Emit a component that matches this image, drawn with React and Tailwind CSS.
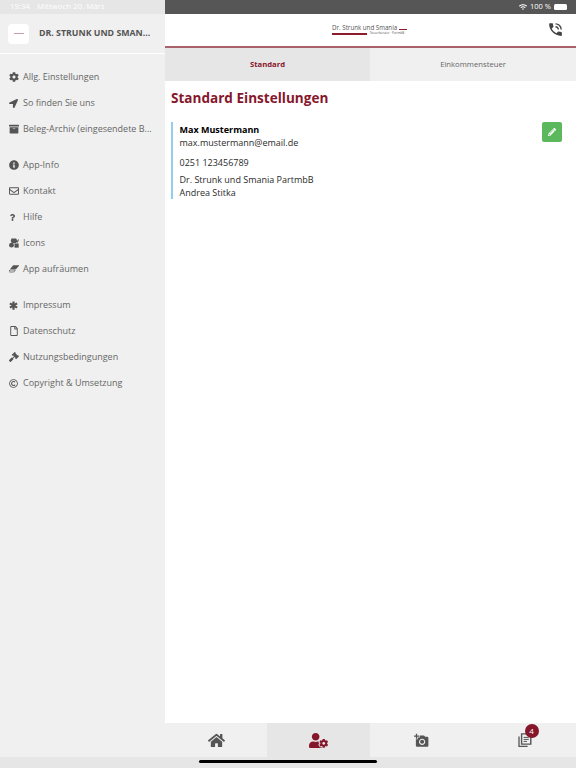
import { FaCog, FaLocationArrow, FaArchive, FaInfoCircle, FaRegEnvelope, FaQuestion, FaRegFile, FaGavel, FaRegCopyright, FaHome, FaUserCog, FaPencilAlt, FaWifi } from "react-icons/fa";
import { MdAddAPhoto, MdPhoneInTalk } from "react-icons/md";

// Small drawn icons the packages have no match for
function ObjectsIcon({ size }) {
    return (
        <svg width={size} height={size} viewBox="0 0 12 12" fill="currentColor">
            <path d="M3 0.5h5.5L10.5 4 8 6.2H3.5L2 3.5Z" />
            <circle cx="3" cy="8.6" r="2.9" />
            <path d="M6.6 6.6h5v5h-5Z" />
            <path d="M9.2 5.4 11 1.6l1 .5-1.6 3.6Z" />
        </svg>
    );
}

function EraserIcon({ size }) {
    return (
        <svg width={size} height={size} viewBox="0 0 12 12" fill="currentColor">
            <path d="M5 1.6H12.4L8.4 6.4H1.2Z" />
            <path d="M1 7.2H7.6L5.8 9.6H0.4C-0.1 9.6 0 9 0.2 8.4Z" fill="none" stroke="currentColor" strokeWidth="0.9" />
        </svg>
    );
}

function StarIcon({ size }) {
    return (
        <svg width={size} height={size} viewBox="0 0 12 12" stroke="currentColor" strokeWidth="3" fill="none">
            <path d="M6 0.5v11M1.2 3.2l9.6 5.6M10.8 3.2l-9.6 5.6" />
        </svg>
    );
}

function DocsIcon({ size }) {
    return (
        <svg width={size} height={size} viewBox="0 0 14 14" fill="none" stroke="currentColor">
            <path d="M1 3.4v10h8.6" strokeWidth="1.3" />
            <path d="M3.6 0.9h9.2v10.2H3.6Z" strokeWidth="1.4" />
            <path d="M5.6 4.4h5.2M5.6 6.4h5.2M5.6 8.4h3.4" strokeWidth="1" />
        </svg>
    );
}

const groups = [
  [
    { icon: FaCog, label: "Allg. Einstellungen" },
    { icon: FaLocationArrow, label: "So finden Sie uns", size: 9 },
    { icon: FaArchive, label: "Beleg-Archiv (eingesendete B..." },
  ],
  [
    { icon: FaInfoCircle, label: "App-Info" },
    { icon: FaRegEnvelope, label: "Kontakt" },
    { icon: FaQuestion, label: "Hilfe", size: 7 },
    { icon: ObjectsIcon, label: "Icons" },
    { icon: EraserIcon, label: "App aufräumen" },
  ],
  [
    { icon: StarIcon, label: "Impressum", size: 9 },
    { icon: FaRegFile, label: "Datenschutz" },
    { icon: FaGavel, label: "Nutzungsbedingungen" },
    { icon: FaRegCopyright, label: "Copyright & Umsetzung", size: 9 },
  ],
];

function Sidebar() {
    return (
        <aside className="w-[165px] shrink-0 flex flex-col bg-[#f0f0f0]">
            <div className="h-[14px] bg-[#e6e6e6] pl-[10px] flex items-center gap-[7px] text-[7.5px] text-white tracking-wide">
                <span>19:34</span>
                <span>Mittwoch 20. März</span>
            </div>
            {/* App title */}
            <div className="h-[40px] flex items-center pl-[8px] border-b border-white">
                <div className="w-[21px] h-[20px] bg-white rounded-[4px] flex items-center justify-center">
                    <div className="w-[10px] h-[1px] bg-[#c9a0a6]"></div>
                </div>
                <span className="ml-[10px] text-[8.8px] font-bold text-[#555555] whitespace-nowrap">DR. STRUNK UND SMAN...</span>
            </div>
            <nav className="pt-[10px] flex flex-col gap-[10px]">
                {groups.map((items, i) => (
                    <div key={i} className="flex flex-col">
                        {items.map(({ icon: Icon, label, size }) => (
                            <div key={label} className="h-[26px] flex items-center text-[#666666]">
                                <span className="w-[23px] pl-[9px] shrink-0 flex text-[#555555]"><Icon size={size || 10} /></span>
                                <span className="text-[9px] whitespace-nowrap">{label}</span>
                            </div>
                        ))}
                    </div>
                ))}
            </nav>
        </aside>
    );
}

function Logo() {
    return (
        <div className="w-[75px] flex flex-col text-[#555555] leading-none">
            <div className="flex items-end">
                <span className="text-[6.2px] whitespace-nowrap">Dr. Strunk und Smania</span>
                <div className="ml-[2px] mb-[1px] h-[1px] flex-1 bg-[#8a1c2e]"></div>
            </div>
            <div className="flex items-center mt-[1px]">
                <div className="w-[35px] h-[2px] bg-[#8a1c2e]"></div>
                <span className="ml-[3px] text-[3px] whitespace-nowrap">Steuerberater · PartmbB</span>
            </div>
        </div>
    );
}

function Main() {
    return (
        <main className="flex-1 flex flex-col min-w-0">
            <div className="h-[14px] bg-[#565656] flex items-center justify-end pr-[9px] text-white text-[7.5px]">
                <FaWifi size={8} />
                <span className="ml-[3px]">100 %</span>
                <div className="ml-[3px] w-[13px] h-[6px] bg-white rounded-[1.5px]"></div>
            </div>
            <header className="h-[34px] flex items-center border-b-2 border-[#a8626c] bg-white relative">
                <div className="flex-1 flex justify-center pr-[2px]"><Logo /></div>
                <MdPhoneInTalk size={17} className="absolute right-[12px] top-[7px] text-[#444444]" />
            </header>
            <div className="h-[33px] flex text-[7.7px]">
                <div className="w-[205px] bg-[#e6e6e6] flex items-center justify-center font-bold text-[#86172b]">Standard</div>
                <div className="flex-1 bg-[#f0f0f0] flex items-center justify-center text-[#666666]">Einkommensteuer</div>
            </div>
            <div className="flex-1 px-[6px] pt-[8px]">
                <h1 className="text-[13.55px] leading-[18px] font-bold text-[#86172b]">Standard Einstellungen</h1>
                <div className="mt-[15px] border-l-2 border-[#93cdef] pl-[6.5px] h-[77px] flex justify-between text-[#2b2b2b] text-[9px]">
                    <div className="pt-[1px]">
                        <div className="font-bold text-black leading-[13px]">Max Mustermann</div>
                        <div className="leading-[13px]">max.mustermann@email.de</div>
                        <div className="mt-[7px] leading-[14px]">0251 123456789</div>
                        <div className="mt-[3px] leading-[13px]">Dr. Strunk und Smania PartmbB</div>
                        <div className="leading-[13px]">Andrea Stitka</div>
                    </div>
                    <button className="w-[20px] h-[20px] mr-[8px] bg-[#5cb85c] rounded-[2px] flex items-center justify-center text-white">
                        <FaPencilAlt size={8} />
                    </button>
                </div>
            </div>
            <div className="h-[34px] flex text-[#555555]">
                <div className="w-[102px] bg-[#f0f0f0] flex items-center justify-center"><FaHome size={17} /></div>
                <div className="w-[103px] bg-[#e6e6e6] flex items-center justify-center text-[#86172b]"><FaUserCog size={19} /></div>
                <div className="w-[103px] bg-[#f0f0f0] flex items-center justify-center"><MdAddAPhoto size={15} /></div>
                <div className="flex-1 bg-[#f0f0f0] flex items-center justify-center">
                    <div className="relative flex">
                        <DocsIcon size={14} />
                        <span className="absolute -top-[9px] left-[7px] w-[14px] h-[14px] rounded-full bg-[#86172b] text-white text-[8px] flex items-center justify-center">4</span>
                    </div>
                </div>
            </div>
        </main>
    );
}

export default function App() {
    return (
        <div className="w-[576px] h-[768px] flex flex-col bg-white overflow-hidden font-['Open_Sans',sans-serif]">
            <div className="flex-1 flex min-h-0">
                <Sidebar />
                <Main />
            </div>
            {/* Home indicator */}
            <div className="h-[11px] bg-[#e6e6e6] flex justify-center pt-[3px]">
                <div className="w-[178px] h-[3px] bg-black rounded-full"></div>
            </div>
        </div>
    );
}
